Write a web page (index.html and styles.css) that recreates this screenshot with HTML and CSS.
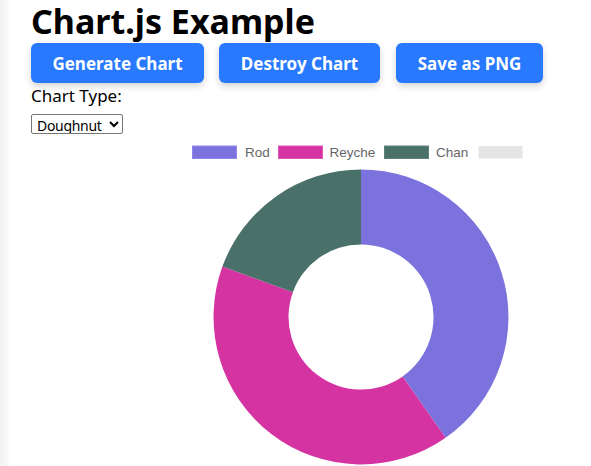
FILE: index.html
```html
<!DOCTYPE html>
<html>
<head>
<meta charset="utf-8">
<title>Chart.js Example</title>
<link rel="stylesheet" href="styles.css">
</head>
<body>
<main class="page">
  <h1 class="title">Chart.js Example</h1>
  <div class="actions">
    <button class="btn btn-generate">Generate Chart</button>
    <button class="btn btn-destroy">Destroy Chart</button>
    <button class="btn btn-save">Save as PNG</button>
  </div>
  <label class="type-label" for="chartType">Chart Type:</label>
  <select id="chartType" class="type-select">
    <option>Doughnut</option>
    <option>Pie</option>
    <option>Bar</option>
  </select>
  <div class="chart">
    <svg class="chart-svg" width="560" height="328" viewBox="0 0 560 328">
      <g class="legend" font-family="'Liberation Sans', Arial, sans-serif" font-size="13.5" fill="#666">
        <rect x="161.5" y="8" width="44" height="12.5" fill="#7b72dd" stroke="#8f87e8" stroke-width="1"/>
        <text x="214" y="19">Rod</text>
        <rect x="247.5" y="8" width="44" height="12.5" fill="#d533a1" stroke="#e056b3" stroke-width="1"/>
        <text x="298.5" y="19">Reyche</text>
        <rect x="353.5" y="8" width="44" height="12.5" fill="#49716a" stroke="#5d827a" stroke-width="1"/>
        <text x="405" y="19">Chan</text>
        <rect x="447.5" y="8" width="44" height="12.5" fill="#e5e5e5"/>
      </g>
      <g class="donut" transform="translate(330 179)">
        <path fill="#7b72dd" d="M0 -147.5 A147.5 147.5 0 0 1 84.6 120.8 L41.6 59.4 A72.5 72.5 0 0 0 0 -72.5 Z"/>
        <path fill="#d533a1" d="M84.6 120.8 A147.5 147.5 0 0 1 -138.6 -50.4 L-68.1 -24.8 A72.5 72.5 0 0 0 41.6 59.4 Z"/>
        <path fill="#49716a" d="M-138.6 -50.4 A147.5 147.5 0 0 1 0 -147.5 L0 -72.5 A72.5 72.5 0 0 0 -68.1 -24.8 Z"/>
      </g>
    </svg>
  </div>
</main>
</body>
</html>
```
FILE: styles.css
```css
html, body {
  margin: 0;
  height: 100%;
  overflow: hidden;
}
body {
  background: linear-gradient(to right, #f2f2f2 0, #f8f8f8 8px, #fdfdfd 9px, #ffffff 10px);
  font-family: "Noto Sans", "Open Sans", sans-serif;
  color: #000;
}
.page {
  padding-left: 31px;
}
.title {
  margin: 0;
  font-size: 34px;
  font-weight: 700;
  line-height: 43px;
  height: 43px;
}
.actions {
  display: flex;
  gap: 15px;
  height: 40px;
}
.btn {
  height: 40px;
  border: none;
  border-radius: 6px;
  background: #2979ff;
  color: #fff;
  font-family: "Noto Sans", sans-serif;
  font-weight: 700;
  font-size: 17px;
  padding: 0;
  box-shadow: 0 3px 7px rgba(0, 0, 0, 0.18);
}
.btn-generate { width: 173px; }
.btn-destroy { width: 161px; }
.btn-save { width: 147px; margin-left: 1px; }
.type-label {
  display: block;
  font-size: 17px;
  line-height: 22px;
  margin-top: 2px;
}
.type-select {
  display: block;
  margin-top: 7px;
  width: 92px;
  height: 20px;
  font-family: "Noto Sans", sans-serif;
  font-size: 14px;
  letter-spacing: -0.3px;
  padding: 0 0 0 1px;
  border: 1px solid #767676;
  border-radius: 2px;
  background: #fff;
  color: #000;
}
.chart {
  margin-top: 4px;
}
.chart-svg {
  display: block;
}
```
